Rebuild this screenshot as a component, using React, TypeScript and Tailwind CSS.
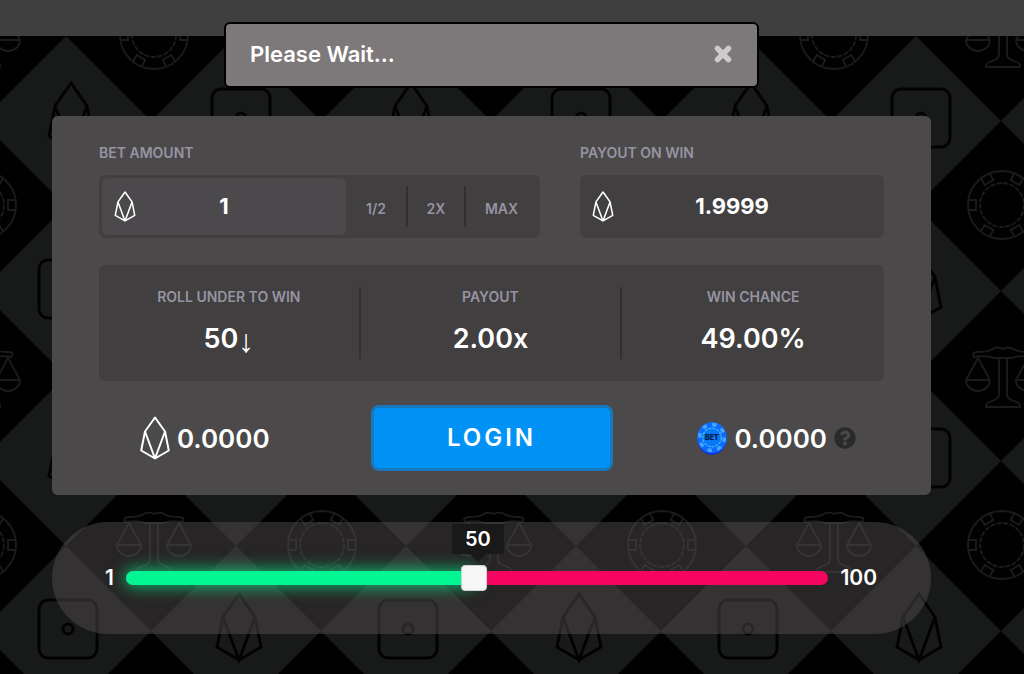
import { useState } from "react";
import { FaQuestionCircle } from "react-icons/fa";

function EosIcon({ className }: { className?: string }) {
  return (
    <svg viewBox="0 0 30 44" fill="none" stroke="currentColor" strokeLinejoin="round" className={className} aria-hidden="true">
      <path d="M15 1.5 5 15.5 1.2 34.5 15 42.5 28.8 34.5 25 15.5Z M5 15.5 15 42.5 25 15.5" />
    </svg>
  );
}

function ChipIcon() {
  return (
    <svg viewBox="0 0 30 34" className="h-[34px] w-[30px]" aria-hidden="true">
      <ellipse cx="15" cy="17.8" rx="14.8" ry="16" fill="#0a35e0" />
      <ellipse cx="15" cy="16.5" rx="14.8" ry="15.5" fill="#0b6cfa" />
      <ellipse cx="15" cy="16.5" rx="12.3" ry="13" fill="none" stroke="#4aa4ff" strokeWidth="3.5" strokeDasharray="4.4 5.5" />
      <circle cx="15" cy="16.5" r="9.3" fill="#0878f5" stroke="#43b4ff" strokeWidth="1.2" strokeDasharray="3 1" />
      <text x="15" y="19" textAnchor="middle" fontSize="7" fontWeight="900" fontFamily="Inter, sans-serif" fill="#061d45">BET</text>
    </svg>
  );
}

function Chip() {
  return (
    <g fill="none">
      <circle r="34" />
      <circle r="22" strokeDasharray="5 1.5" />
      {[0, 60, 120, 180, 240, 300].map((a) => (
        <path key={a} transform={`rotate(${a})`} d="M33-5H26V5H33" />
      ))}
    </g>
  );
}

function Scales() {
  return (
    <g fill="none" strokeLinejoin="round">
      <path d="M-4-20V15Q-4 20-11 22-18 24-17 28H17Q18 24 11 22 4 20 4 15V-20" />
      <path d="M-29-22Q-32-27-25-27-17-27-12-29-6-33 0-30 6-33 12-29 17-27 25-27 32-27 28-22 16-24 9-21H-9Q-16-24-29-22Z" />
      <path d="M-25-21-37 1A12 11 0 0 0-13 1Z M-36 1H-14 M25-21 37 1A12 11 0 0 1 13 1Z M36 1H14" />
    </g>
  );
}

function Gem() {
  return <path fill="none" d="M0-35-16-12-22 18 0 31 22 18 16-12Z M-16-12 0 31 16-12" />;
}

function Die() {
  return (
    <g fill="none">
      <rect x="-29" y="-29" width="58" height="58" rx="9" />
      <circle r="5" />
    </g>
  );
}

function Backdrop() {
  return (
    <svg className="absolute inset-0 h-full w-full" aria-hidden="true">
      <defs>
        <pattern id="light" x="-19" y="36" width="340" height="340" patternUnits="userSpaceOnUse">
          <path fill="#181919" d="M85 0 170 85 85 170 0 85Z M255 0 340 85 255 170 170 85Z M85 170 170 255 85 340 0 255Z M255 170 340 255 255 340 170 255Z" />
          <g stroke="#020202" strokeWidth="3">
            <g transform="translate(90 82)"><Gem /></g>
            <g transform="translate(260 82)"><Die /></g>
            <g transform="translate(87 253)"><Die /></g>
            <g transform="translate(258 253)"><Gem /></g>
          </g>
        </pattern>
        <pattern id="dark" x="66" y="-49" width="340" height="340" patternUnits="userSpaceOnUse">
          <g stroke="#1b1b1c" strokeWidth="1.8">
            <g transform="translate(88 84)"><Chip /></g>
            <g transform="translate(257 88)"><Scales /></g>
            <g transform="translate(88 253)"><Scales /></g>
            <g transform="translate(256 254)"><Chip /></g>
          </g>
        </pattern>
      </defs>
      <rect width="100%" height="100%" fill="#010101" />
      <rect width="100%" height="100%" fill="url(#light)" />
      <rect width="100%" height="100%" fill="url(#dark)" />
    </svg>
  );
}

function Stat({ label, children }: { label: string; children: React.ReactNode }) {
  return (
    <div className="flex h-[72px] flex-col items-center gap-3">
      <span className="text-sm leading-5 font-semibold text-[#9694a2]">{label}</span>
      <span className="flex h-10 items-center text-[27px] font-semibold">{children}</span>
    </div>
  );
}

export default function App() {
  const [bet, setBet] = useState("1");
  const [roll, setRoll] = useState(50);
  const [open, setOpen] = useState(true);
  const chance = Math.max(roll - 1, 1);
  const multiplier = 98 / chance;
  const payout = (Number(bet) || 0) * multiplier * 0.99995;
  const fill = ((roll - 1) / 99) * 100;

  return (
    <div className="relative min-h-screen overflow-hidden bg-black font-['Inter',sans-serif] text-white">
      <Backdrop />
      <header className="relative h-9 bg-[#403f3f]" />

      {open && (
        <div className="absolute inset-x-0 top-[22px] z-10 flex justify-center pr-[93px] pl-[52px]">
          <div role="status" className="flex h-[66px] w-[535px] items-center justify-between rounded-md border-2 border-black bg-[#7d7879] px-6 pb-0.5">
            <span className="text-[22px] font-semibold">Please Wait...</span>
            <button aria-label="Close" onClick={() => setOpen(false)} className="text-[#cdcbcb]">
              <svg viewBox="0 0 20 20" className="size-5" stroke="currentColor" strokeWidth="5.5" strokeLinecap="round">
                <path d="M4.5 4.5 15.5 15.5 M15.5 4.5 4.5 15.5" />
              </svg>
            </button>
          </div>
        </div>
      )}

      <main className="relative flex flex-col gap-[27px] pt-20 pr-[93px] pl-[52px]">
        <section className="flex flex-col rounded-md bg-[#4b494a] px-[47px] pt-[27px] pb-6">
          <div className="grid grid-cols-[441fr_304fr] gap-10">
            <div>
              <label htmlFor="bet" className="block text-sm leading-5 font-semibold text-[#9694a2]">BET AMOUNT</label>
              <div className="mt-3 flex h-[63px] rounded-md bg-[#413f40] p-[3px]">
                <div className="grid flex-1 grid-cols-[22px_1fr_22px] items-center rounded-md bg-[#4b494b] px-3">
                  <EosIcon className="h-[31px] w-[22px] stroke-[2.2]" />
                  <input id="bet" value={bet} onChange={(e) => setBet(e.target.value)} className="w-full min-w-0 bg-transparent text-center text-[22px] font-bold outline-none" />
                </div>
                <div className="grid w-[191px] grid-cols-[60px_60px_71px] py-2 text-sm font-semibold text-[#9694a2]">
                  <button onClick={() => setBet(String(Number(bet) / 2))} className="pt-1">1/2</button>
                  <button onClick={() => setBet(String(Number(bet) * 2))} className="border-x-2 border-[#313031] pt-1">2X</button>
                  <button onClick={() => setBet("100")} className="pt-1">MAX</button>
                </div>
              </div>
            </div>
            <div>
              <label htmlFor="payout" className="block text-sm leading-5 font-semibold text-[#9694a2]">PAYOUT ON WIN</label>
              <div className="mt-3 grid h-[63px] grid-cols-[22px_1fr_22px] items-center rounded-md bg-[#413f40] px-3">
                <EosIcon className="h-[31px] w-[22px] stroke-[2.2]" />
                <input id="payout" readOnly value={payout.toFixed(4)} className="w-full min-w-0 bg-transparent text-center text-[22px] font-bold outline-none" />
              </div>
            </div>
          </div>

          <div className="mt-[27px] grid h-[116px] grid-cols-3 items-center divide-x-2 divide-[#313031] rounded-md bg-[#413f40]">
            <Stat label="ROLL UNDER TO WIN">
              {roll}
              <span className="pt-1 font-['Liberation_Serif',serif] text-[32px] font-normal">↓</span>
            </Stat>
            <Stat label="PAYOUT">{multiplier.toFixed(2)}x</Stat>
            <Stat label="WIN CHANCE">{chance.toFixed(2)}%</Stat>
          </div>

          <div className="mt-6 grid grid-cols-[1fr_242px_1fr] items-center text-[26px] font-semibold">
            <div className="flex items-center justify-center gap-[7px] pr-[60px]">
              <EosIcon className="h-11 w-[30px] stroke-2" />
              <span>0.0000</span>
            </div>
            <button className="h-[66px] rounded-lg border-3 border-[#1779bb] bg-[#0092f4] text-2xl font-semibold tracking-[3px]">LOGIN</button>
            <div className="flex items-center justify-end gap-[7px] pr-7">
              <ChipIcon />
              <span>0.0000</span>
              <button aria-label="Help" className="text-[#2b2a2b]"><FaQuestionCircle className="size-[22px]" /></button>
            </div>
          </div>
        </section>

        <section className="flex h-[112px] items-center gap-3 rounded-full bg-[#565253]/45 pr-[54px] pl-[53px] text-[21px] font-semibold">
          <label htmlFor="roll">1</label>
          <div className="relative h-3.5 flex-1 rounded-full bg-[#f60462]">
            <div style={{ width: `${fill}%` }} className="h-full rounded-l-full bg-[#04f594] shadow-[0_0_16px_2px_#04f594b0]" />
            <input
              id="roll"
              type="range"
              min={1}
              max={100}
              value={roll}
              onChange={(e) => setRoll(Number(e.target.value))}
              className="absolute inset-0 h-full w-full appearance-none bg-transparent outline-none [&::-webkit-slider-thumb]:size-[26px] [&::-webkit-slider-thumb]:appearance-none [&::-webkit-slider-thumb]:rounded [&::-webkit-slider-thumb]:border [&::-webkit-slider-thumb]:border-[#d0d0d0] [&::-webkit-slider-thumb]:bg-[#f6f6f6]"
            />
            <output htmlFor="roll" style={{ left: `${fill + 0.6}%` }} className="absolute bottom-[31px] flex h-[30px] w-[52px] -translate-x-1/2 items-center justify-center bg-[#19191a] text-xl font-semibold">
              {roll}
              <span className="absolute top-full border-x-8 border-t-8 border-x-transparent border-t-[#19191a]" />
            </output>
          </div>
          <span>100</span>
        </section>
      </main>
    </div>
  );
}
